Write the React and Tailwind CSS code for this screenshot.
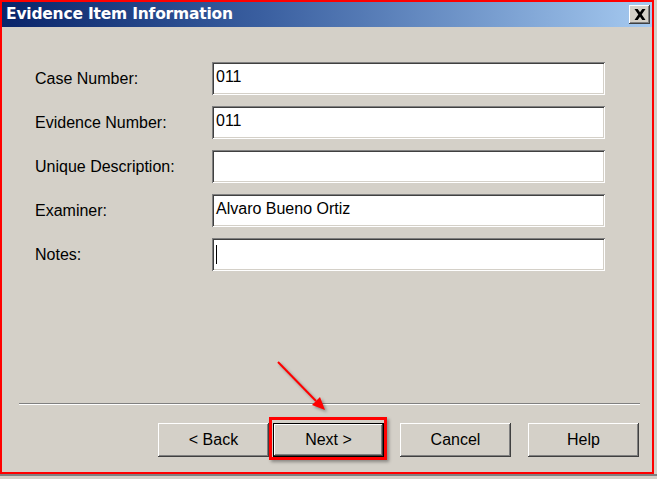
import React from 'react';

const raised = 'shadow-[inset_-1px_-1px_#404040,inset_1px_1px_#ffffff,inset_-2px_-2px_#808080,inset_2px_2px_#d4d0c8]';
const sunken = 'shadow-[inset_1px_1px_#808080,inset_-1px_-1px_#ffffff,inset_2px_2px_#404040,inset_-2px_-2px_#d4d0c8]';

const fields = [
    { label: 'Case Number:', value: '011' },
    { label: 'Evidence Number:', value: '011' },
    { label: 'Unique Description:', value: '' },
    { label: 'Examiner:', value: 'Alvaro Bueno Ortiz' },
    { label: 'Notes:', value: '', caret: true }
];

const App = () => {
    return (
        <div className="relative w-[657px] h-[479px] bg-[#d4d0c8] overflow-hidden font-['Liberation_Sans',Arial,sans-serif] text-[16px] text-black">
            <div className="w-[654px] h-[474px] border-2 border-[#ff0000] flex flex-col">
                {/* title bar */}
                <div className="h-[25px] flex items-center justify-between pl-[4px] pr-[2px] bg-linear-to-r from-[#0a246a] via-[#3a5fa0] via-40% to-[#a6caf0]">
                    <span className="font-['DejaVu_Sans',sans-serif] font-bold text-[15.5px] text-white tracking-[-0.2px]">
                        Evidence Item Information
                    </span>
                    <button className={`w-[21px] h-[19px] flex items-center justify-center bg-[#d4d0c8] ${raised}`}>
                        <svg width="12" height="11" viewBox="0 0 12 11">
                            <path d="M0.5 0h3.2l2.3 3.3 2.3-3.3h3.2L7.7 5.5 11.5 11H8.3L6 7.7 3.7 11H0.5l3.8-5.5z" fill="#000" />
                        </svg>
                    </button>
                </div>

                {/* form */}
                <div className="flex flex-col gap-[11px] pt-[35px] pl-[33px]">
                    {fields.map(f => (
                        <div key={f.label} className="flex items-center">
                            <span className="w-[177px]">{f.label}</span>
                            <div className={`w-[393px] h-[33px] bg-white flex items-center pl-[4px] pb-[3px] ${sunken}`}>
                                {f.value}
                                {f.caret && <span className="w-px h-[19px] bg-black mt-[2px]" />}
                            </div>
                        </div>
                    ))}
                </div>

                <div className="flex-1" />

                {/* separator */}
                <div className="ml-[17px] w-[621px] h-[2px] border-t border-[#808080] border-b border-b-white" />

                {/* buttons */}
                <div className="flex justify-end pr-[13px] mt-[18px] mb-[15px]">
                    <button className={`w-[111px] h-[34px] bg-[#d4d0c8] ${raised}`}>&lt; Back</button>
                    <div className="relative ml-[4px]">
                        <button className="w-[111px] h-[34px] bg-[#d4d0c8] shadow-[inset_-1px_-1px_#000,inset_1px_1px_#000,inset_-2px_-2px_#404040,inset_2px_2px_#ffffff,inset_-3px_-3px_#808080]">
                            Next &gt;
                        </button>
                        <span className="absolute -top-[6px] -bottom-[3px] -left-[4px] -right-[3px] border-[3px] border-[#ff0000] shadow-[2px_2px_3px_rgba(0,0,0,0.35)] pointer-events-none" />
                    </div>
                    <button className={`w-[111px] h-[34px] ml-[16px] bg-[#d4d0c8] ${raised}`}>Cancel</button>
                    <button className={`w-[111px] h-[34px] ml-[17px] bg-[#d4d0c8] ${raised}`}>Help</button>
                </div>
            </div>
            <div className="h-[5px] border-t-2 border-[#808080]" />

            {/* annotation arrow */}
            <svg className="absolute left-0 top-0 pointer-events-none" width="657" height="479">
                <g style={{ filter: 'drop-shadow(2px 2px 1.5px rgba(0,0,0,0.35))' }}>
                    <line x1="278" y1="362" x2="316" y2="401" stroke="#ff0000" strokeWidth="2" />
                    <polygon points="325,410 312,405 320,397" fill="#ff0000" />
                </g>
            </svg>
        </div>
    );
};

export default App;
